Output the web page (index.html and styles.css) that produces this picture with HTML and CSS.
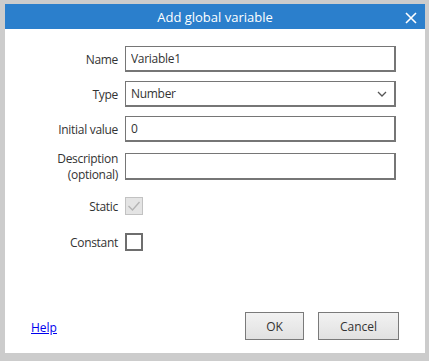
FILE: index.html
```html
<!DOCTYPE html>
<html lang="en">
<head>
    <meta charset="UTF-8">
    <title>Add global variable</title>
    <link rel="stylesheet" href="styles.css">
</head>
<body>
    <div class="dialog">
        <div class="titlebar">
            <span class="title">Add global variable</span>
            <span class="close">
                <svg width="12" height="12" viewBox="0 0 12 12"><path d="M1 1 L11 11 M11 1 L1 11" stroke="#fff" stroke-width="1.6" fill="none"/></svg>
            </span>
        </div>

        <div class="form">
            <div class="row">
                <label class="label">Name</label>
                <input class="input" type="text" value="Variable1">
            </div>

            <div class="row">
                <label class="label">Type</label>
                <div class="select">
                    <span>Number</span>
                    <svg width="10" height="6" viewBox="0 0 10 6"><path d="M1 1 L5 5 L9 1" stroke="#555" stroke-width="1.3" fill="none"/></svg>
                </div>
            </div>

            <div class="row row-initial">
                <label class="label">Initial value</label>
                <input class="input" type="text" value="0">
            </div>

            <div class="row row-desc">
                <label class="label two-line">Description<br>(optional)</label>
                <input class="input tall" type="text" value="">
            </div>

            <div class="row row-check row-static">
                <label class="label">Static</label>
                <span class="checkbox disabled">
                    <svg width="14" height="12" viewBox="0 0 14 12"><path d="M1.5 6 L5.5 10 L12.5 2" stroke="#b4b4b4" stroke-width="1.4" fill="none"/></svg>
                </span>
            </div>

            <div class="row row-check row-constant">
                <label class="label">Constant</label>
                <span class="checkbox"></span>
            </div>
        </div>

        <div class="footer">
            <a class="help" href="#">Help</a>
            <div class="buttons">
                <button class="btn ok">OK</button>
                <button class="btn cancel">Cancel</button>
            </div>
        </div>
    </div>
</body>
</html>
```

FILE: styles.css
```css
html, body {
    margin: 0;
    height: 100%;
}
body {
    background-color: #cccccc;
    font-family: "Open Sans", "Noto Sans", sans-serif;
    font-size: 12px;
    color: #333;
    padding: 4px 4px 8px 5px;
    box-sizing: border-box;
}
.dialog {
    background: white;
    height: 349px;
    display: flex;
    flex-direction: column;
}
.titlebar {
    background-color: #2b7fcc;
    height: 25px;
    position: relative;
    display: flex;
    align-items: center;
    justify-content: center;
    color: white;
    font-size: 13px;
}
.close {
    position: absolute;
    right: 8px;
    top: 6px;
    height: 12px;
}
.form {
    padding-top: 17px;
}
.row {
    display: flex;
    align-items: center;
    gap: 7px;
    height: 26px;
    margin-bottom: 9px;
}
.row-initial { margin-bottom: 11px; }
.row-desc {
    height: 27px;
    margin-bottom: 17px;
}
.row-check { height: 18px; }
.row-static { margin-bottom: 18px; }
.label {
    width: 113px;
    flex: none;
    text-align: right;
    letter-spacing: -0.3px;
}
.two-line {
    line-height: 16px;
}
.input, .select {
    box-sizing: border-box;
    width: 271px;
    height: 26px;
    margin: 0;
    border: 1px solid #767676;
    border-right-width: 2px;
    border-bottom-width: 2px;
    font-family: inherit;
    font-size: 12px;
    color: #333;
    letter-spacing: -0.3px;
}
.input {
    padding: 0 5px;
    outline: none;
}
.input.tall { height: 27px; }
.select {
    padding: 0 7px 0 5px;
    display: flex;
    align-items: center;
    justify-content: space-between;
}
.checkbox {
    box-sizing: border-box;
    display: flex;
    align-items: center;
    justify-content: center;
    width: 18px;
    height: 18px;
    border: 2px solid #6e6e6e;
    background: white;
}
.checkbox.disabled {
    border: 1px solid #c2c2c2;
    background: #e4e4e4;
}
.footer {
    margin-top: auto;
    display: flex;
    align-items: center;
    justify-content: space-between;
    padding: 0 26px 13px 26px;
}
.help {
    color: #0000ee;
    text-decoration: underline;
    font-size: 12px;
    margin-top: 2px;
}
.buttons {
    display: flex;
    gap: 14px;
}
.btn {
    height: 28px;
    border: 1px solid #7a7a7a;
    background: linear-gradient(#f2f2f2, #e1e1e1);
    font-family: inherit;
    font-size: 12px;
    color: #333;
    padding: 0;
}
.btn.ok { width: 59px; }
.btn.cancel { width: 81px; }
```
